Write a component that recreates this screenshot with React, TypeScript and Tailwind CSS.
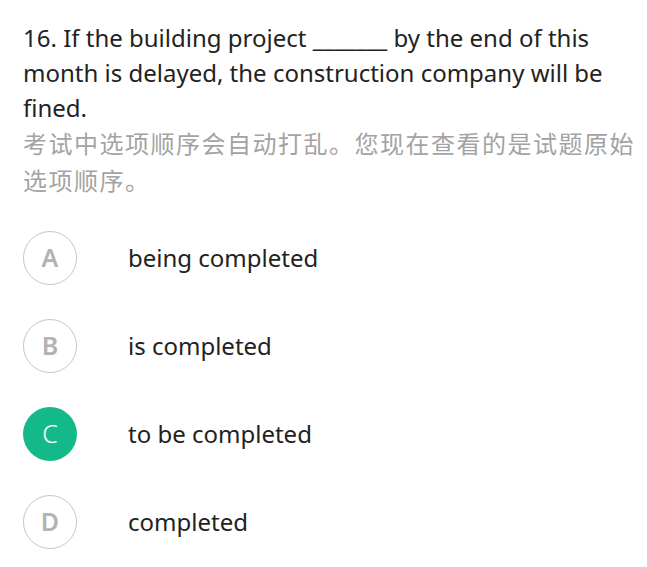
const options = [
  { key: "A", text: "being completed", selected: false },
  { key: "B", text: "is completed", selected: false },
  { key: "C", text: "to be completed", selected: true },
  { key: "D", text: "completed", selected: false },
];

export default function App() {
  return (
    <div
      className="min-h-screen bg-white pl-[23px] pr-[8px] pt-[20px] text-[#222]"
      style={{ fontFamily: '"Noto Sans", "Noto Sans CJK SC", sans-serif' }}
    >
      <p className="pr-[4px] text-[24px] leading-[35px]">
        16. If the building project _______ by the end of this month is delayed, the construction company will be fined.
      </p>
      <p className="text-[24px] leading-[37px] tracking-[1.5px] text-[#a3a3a3]">
        考试中选项顺序会自动打乱。您现在查看的是试题原始选项顺序。
      </p>
      <ul className="mt-[32px] flex flex-col gap-[34px]">
        {options.map((o) => (
          <li key={o.key} className="flex items-center">
            <span
              className={
                o.selected
                  ? "flex h-[54px] w-[54px] items-center justify-center rounded-full bg-[#14b98a] text-[25px] font-light text-white"
                  : "flex h-[54px] w-[54px] items-center justify-center rounded-full border-[1.5px] border-[#c6c6c6] text-[25px] font-semibold text-[#b3b3b3]"
              }
            >
              {o.key}
            </span>
            <span className="ml-[51px] text-[24px]">{o.text}</span>
          </li>
        ))}
      </ul>
    </div>
  );
}
